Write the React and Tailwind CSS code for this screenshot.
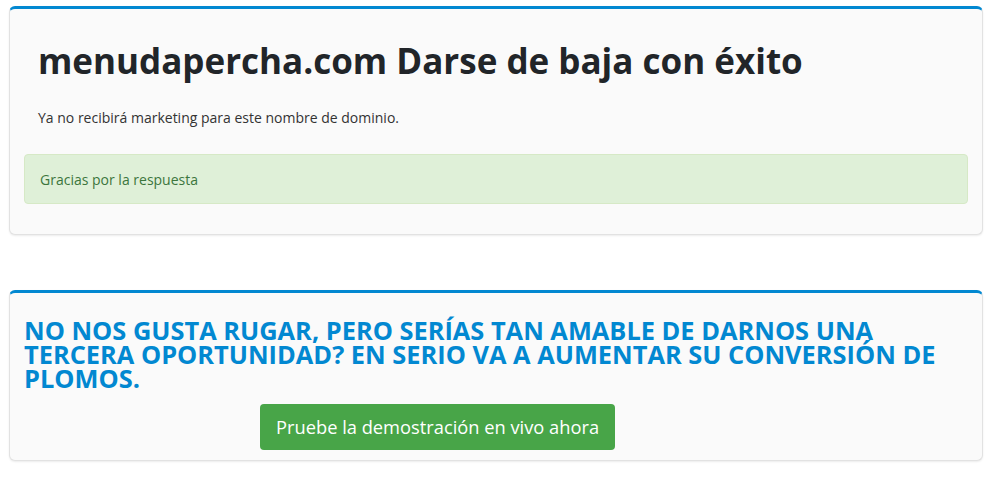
import React from 'react';

const App = () => {
    return (
        <div className="min-h-screen bg-white pt-[6px]" style={{ fontFamily: '"Open Sans", "Liberation Sans", sans-serif' }}>
            <div className="ml-[9px] w-[974px]">
                {/* confirmation card */}
                <div className="bg-[#fafafa] border border-[#e2e2e2] border-t-[3px] border-t-[#0288d1] rounded-[6px] shadow-[0_1px_2px_rgba(0,0,0,0.08)] px-[14px] pt-[30px] pb-[30px]">
                    <h1 className="px-[14px] text-[35px] leading-[44px] font-bold text-[#212529]">
                        menudapercha.com Darse de baja con éxito
                    </h1>
                    <p className="px-[14px] mt-[25px] text-[14px] leading-[20px] text-[#333]">
                        Ya no recibirá marketing para este nombre de dominio.
                    </p>
                    <div className="mt-[26px] h-[50px] flex items-center px-[15px] bg-[#dff0d8] border border-[#d6e9c6] rounded-[4px] text-[14px] text-[#3c763d]">
                        Gracias por la respuesta
                    </div>
                </div>

                {/* second chance card */}
                <div className="mt-[55px] bg-[#fafafa] border border-[#e2e2e2] border-t-[3px] border-t-[#0288d1] rounded-[6px] shadow-[0_1px_2px_rgba(0,0,0,0.08)] px-[14px] pt-[25px] pb-[10px]">
                    <h2 className="text-[25.4px] leading-[24px] font-bold uppercase text-[#0288d1] pr-[20px]">
                        No nos gusta rugar, pero serías tan amable de darnos una tercera oportunidad? En serio va a aumentar su conversión de plomos.
                    </h2>
                    <button className="mt-[14px] ml-[236px] h-[46px] px-[16px] bg-[#48a548] text-white text-[18.3px] rounded-[4px]">
                        Pruebe la demostración en vivo ahora
                    </button>
                </div>
            </div>
        </div>
    );
};

export default App;
